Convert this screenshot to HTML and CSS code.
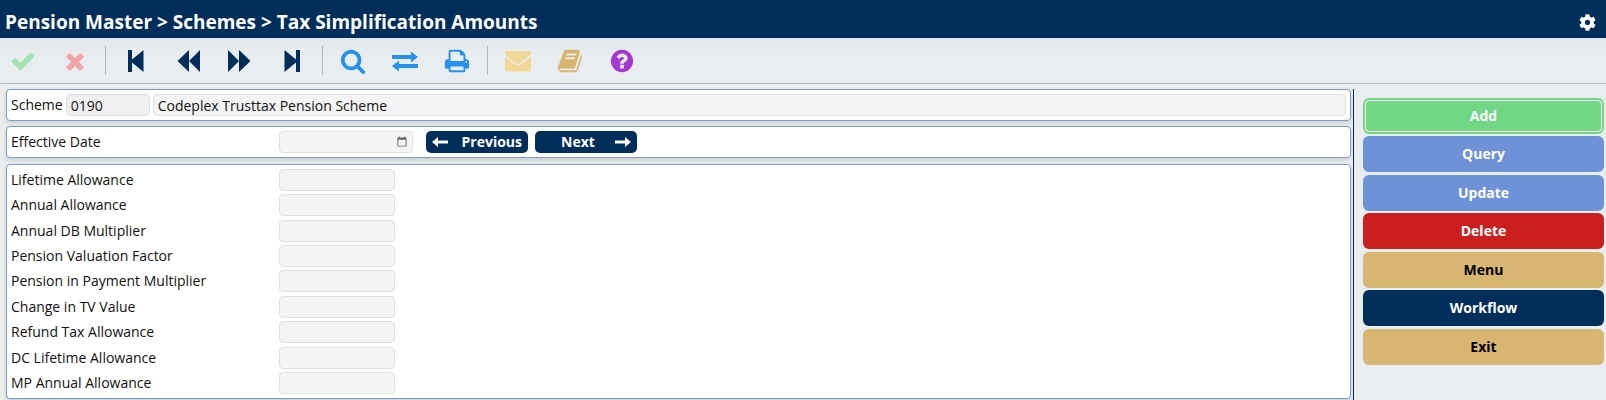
FILE: index.html
```html
<!DOCTYPE html>
<html lang="en">
<head>
<meta charset="utf-8">
<meta name="viewport" content="width=device-width, initial-scale=1">
<title>Tax Simplification Amounts</title>
<link rel="stylesheet" href="styles.css">
</head>
<body>
<header class="header">
  <h1 class="title">Pension Master &gt; Schemes &gt; Tax Simplification Amounts</h1>
  <button class="settings" type="button" aria-label="Settings">
    <svg class="settings-icon" viewBox="0 0 512 512"><path d="M487.4 315.7l-42.6-24.6c4.3-23.2 4.3-47 0-70.2l42.6-24.6c4.9-2.8 7.1-8.6 5.5-14-11.1-35.6-30-67.8-54.7-94.6-3.8-4.1-10-5.1-14.8-2.3L380.8 110c-17.9-15.4-38.5-27.3-60.8-35.1V25.8c0-5.6-3.9-10.5-9.4-11.7-36.7-8.2-74.3-7.8-109.2 0-5.5 1.2-9.4 6.1-9.4 11.7V75c-22.2 7.9-42.8 19.8-60.8 35.1L88.7 85.5c-4.9-2.8-11-1.9-14.8 2.3-24.7 26.7-43.6 58.9-54.7 94.6-1.7 5.4.6 11.2 5.5 14L67.3 221c-4.3 23.2-4.3 47 0 70.2l-42.6 24.6c-4.9 2.8-7.1 8.6-5.5 14 11.1 35.6 30 67.8 54.7 94.6 3.8 4.1 10 5.1 14.8 2.3l42.6-24.6c17.9 15.4 38.5 27.3 60.8 35.1v49.2c0 5.6 3.9 10.5 9.4 11.7 36.7 8.2 74.3 7.8 109.2 0 5.5-1.2 9.4-6.1 9.4-11.7v-49.2c22.2-7.9 42.8-19.8 60.8-35.1l42.6 24.6c4.9 2.8 11 1.9 14.8-2.3 24.7-26.7 43.6-58.9 54.7-94.6 1.5-5.5-.7-11.3-5.6-14.1zM256 336c-44.1 0-80-35.9-80-80s35.9-80 80-80 80 35.9 80 80-35.9 80-80 80z"/></svg>
  </button>
</header>

<nav class="toolbar" aria-label="Toolbar">
  <button class="tool tool-accept" type="button" aria-label="Accept"><svg class="icon" viewBox="0 0 1792 1792"><path d="M1671 566q0 40-28 68l-724 724-136 136q-28 28-68 28t-68-28l-136-136-362-362q-28-28-28-68t28-68l136-136q28-28 68-28t68 28l294 295 656-657q28-28 68-28t68 28l136 136q28 28 28 68z"/></svg></button>
  <button class="tool tool-cancel" type="button" aria-label="Cancel"><svg class="icon" viewBox="0 0 1792 1792"><path d="M1490 1322q0 40-28 68l-136 136q-28 28-68 28t-68-28l-294-294-294 294q-28 28-68 28t-68-28l-136-136q-28-28-28-68t28-68l294-294-294-294q-28-28-28-68t28-68l136-136q28-28 68-28t68 28l294 294 294-294q28-28 68-28t68 28l136 136q28 28 28 68t-28 68l-294 294 294 294q28 28 28 68z"/></svg></button>
  <span class="divider"></span>
  <button class="tool tool-move" type="button" aria-label="First"><svg class="icon" viewBox="0 0 26 26"><path d="M5 2h4v9.500L20.500 2v22L9 14.500V24H5z"/></svg></button>
  <button class="tool tool-move" type="button" aria-label="Back"><svg class="icon" viewBox="0 0 26 26"><path d="M2.500 13L14 2v11L25 2v22L14 13v11z"/></svg></button>
  <button class="tool tool-move" type="button" aria-label="Forward"><svg class="icon" viewBox="0 0 26 26"><path d="M23.500 13L12 2v11L1 2v22L12 13v11z"/></svg></button>
  <button class="tool tool-move" type="button" aria-label="Last"><svg class="icon" viewBox="0 0 26 26"><path d="M21 2h-4v9.500L5.500 2v22L17 14.500V24h4z"/></svg></button>
  <span class="divider"></span>
  <button class="tool tool-record" type="button" aria-label="Search"><svg class="icon" viewBox="0 0 1792 1792"><path d="M1216 832q0-185-131.500-316.500t-316.500-131.500-316.500 131.500-131.500 316.500 131.500 316.500 316.500 131.500 316.500-131.500 131.500-316.500zm512 832q0 52-38 90t-90 38q-54 0-90-38l-343-342q-179 124-399 124-143 0-273.500-55.500t-225-150-150-225-55.500-273.500 55.500-273.500 150-225 225-150 273.500-55.500 273.500 55.500 225 150 150 225 55.500 273.500q0 220-124 399l343 343q37 37 37 90z"/></svg></button>
  <button class="tool tool-record" type="button" aria-label="Switch"><svg class="icon" viewBox="0 0 26 26"><path d="M0 7h19V3.500L26 9l-7 5.500V11H0zM26 16v4H7v3.500L0 18l7-5.500V16z"/></svg></button>
  <button class="tool tool-record" type="button" aria-label="Print"><svg class="icon" viewBox="0 0 1792 1792"><path d="M448 1536h896v-256h-896v256zm0-640h896v-384h-160q-40 0-68-28t-28-68v-160h-640v640zm1152 64q0-26-19-45t-45-19-45 19-19 45 19 45 45 19 45-19 19-45zm128 0v416q0 13-9.500 22.500t-22.500 9.500h-224v160q0 40-28 68t-68 28h-960q-40 0-68-28t-28-68v-160h-224q-13 0-22.500-9.500t-9.500-22.500v-416q0-79 56.500-135.500t135.500-56.500h64v-544q0-40 28-68t68-28h672q40 0 88 20t76 48l152 152q28 28 48 76t20 88v256h64q79 0 135.500 56.500t56.500 135.500z"/></svg></button>
  <span class="divider"></span>
  <button class="tool tool-mail" type="button" aria-label="Mail"><svg class="icon" viewBox="0 0 26 26"><path d="M2 3h22q2 0 2 2v1.500L15.500 15q-2.500 2-5 0L0 6.500V5q0-2 2-2zM0 8.500l9.500 7.500q3.500 2.500 7 0L26 8.500v13q0 2-2 2H2q-2 0-2-2z"/></svg></button>
  <button class="tool tool-book" type="button" aria-label="Notes"><svg class="icon" viewBox="0 0 1792 1792"><path d="M1703 478q40 57 18 129l-275 906q-19 64-76.500 107.500t-122.500 43.500h-923q-77 0-148.500-53.500t-99.500-131.500q-24-67-2-127 0-4 3-27t4-37q1-8-3-21.500t-3-19.500q2-11 8-21t16.500-23.500 16.500-23.500q23-38 45-91.500t30-91.500q3-10 .5-30t-.5-28q3-11 17-28t17-23q21-36 42-92t25-90q1-9-2.500-32t.5-28q4-13 22-30.500t22-22.500q19-26 42.500-84.500t27.500-96.500q1-8-3-25.500t-2-26.500q2-8 9-18t18-23 17-21q8-12 16.500-30.500t15-35 16-36 19.500-32 26.500-23.500 36-11.500 47.500 5.500l-1 3q38-9 51-9h761q74 0 114 56t18 130l-274 906q-36 119-71.500 153.500t-128.500 34.500h-869q-27 0-38 15-11 16-1 43 24 70 144 70h923q29 0 56-15.500t35-41.500l300-987q7-22 5-57 38 15 59 43zm-1064 2q-4 13 2 22.500t20 9.500h608q13 0 25.500-9.500t16.500-22.500l21-64q4-13-2-22.500t-20-9.500h-608q-13 0-25.500 9.500t-16.500 22.500zm-83 256q-4 13 2 22.500t20 9.500h608q13 0 25.500-9.500t16.500-22.500l21-64q4-13-2-22.500t-20-9.500h-608q-13 0-25.500 9.500t-16.500 22.500z"/></svg></button>
  <button class="tool tool-help" type="button" aria-label="Help"><svg class="icon" viewBox="0 0 1792 1792"><path d="M1024 1376v-192q0-14-9-23t-23-9h-192q-14 0-23 9t-9 23v192q0 14 9 23t23 9h192q14 0 23-9t9-23zm256-672q0-88-55.500-163t-138.500-116-170-41q-243 0-371 213-15 24 8 42l132 100q7 6 19 6 16 0 25-12 53-68 86-92 34-24 86-24 48 0 85.500 26t37.500 59q0 38-20 61t-68 45q-63 28-115.500 86.500t-52.500 125.500v36q0 14 9 23t23 9h192q14 0 23-9t9-23q0-19 21.500-49.500t54.500-49.500q32-18 49-28.500t46-35 44.500-48 28-60.500 12.500-81zm384 192q0 209-103 385.500t-279.500 279.500-385.500 103-385.500-103-279.500-279.500-103-385.500 103-385.500 279.500-279.500 385.500-103 385.500 103 279.500 279.500 103 385.500z"/></svg></button>
</nav>

<div class="content">
  <main class="main">
    <section class="panel panel-scheme">
      <label for="scheme">Scheme</label>
      <input class="field field-code" id="scheme" type="text" value="0190">
      <input class="field field-name" type="text" value="Codeplex Trusttax Pension Scheme" aria-label="Scheme name" readonly>
    </section>

    <section class="panel panel-date">
      <label class="label" for="effective">Effective Date</label>
      <input class="field field-date" id="effective" type="date">
      <div class="pager">
        <button class="page-button" type="button"><svg class="arrow" viewBox="0 0 16 12"><path d="M0 6l6-5v3.500h10v3H6V11z"/></svg><span class="page-text">Previous</span></button>
        <button class="page-button" type="button"><span class="page-text">Next</span><svg class="arrow" viewBox="0 0 16 12"><path d="M16 6l-6-5v3.500H0v3h10V11z"/></svg></button>
      </div>
    </section>

    <section class="panel panel-amounts">
      <div class="row"><label class="label" for="a1">Lifetime Allowance</label><input class="field field-amount" id="a1" type="text" readonly></div>
      <div class="row"><label class="label" for="a2">Annual Allowance</label><input class="field field-amount" id="a2" type="text" readonly></div>
      <div class="row"><label class="label" for="a3">Annual DB Multiplier</label><input class="field field-amount" id="a3" type="text" readonly></div>
      <div class="row"><label class="label" for="a4">Pension Valuation Factor</label><input class="field field-amount" id="a4" type="text" readonly></div>
      <div class="row"><label class="label" for="a5">Pension in Payment Multiplier</label><input class="field field-amount" id="a5" type="text" readonly></div>
      <div class="row"><label class="label" for="a6">Change in TV Value</label><input class="field field-amount" id="a6" type="text" readonly></div>
      <div class="row"><label class="label" for="a7">Refund Tax Allowance</label><input class="field field-amount" id="a7" type="text" readonly></div>
      <div class="row"><label class="label" for="a8">DC Lifetime Allowance</label><input class="field field-amount" id="a8" type="text" readonly></div>
      <div class="row"><label class="label" for="a9">MP Annual Allowance</label><input class="field field-amount" id="a9" type="text" readonly></div>
    </section>
  </main>

  <aside class="actions">
    <button class="action action-add" type="button">Add</button>
    <button class="action action-blue" type="button">Query</button>
    <button class="action action-blue" type="button">Update</button>
    <button class="action action-red" type="button">Delete</button>
    <button class="action action-gold" type="button">Menu</button>
    <button class="action action-navy" type="button">Workflow</button>
    <button class="action action-gold" type="button">Exit</button>
  </aside>
</div>
</body>
</html>
```
FILE: styles.css
```css
* {
  box-sizing: border-box;
}

body {
  margin: 0;
  min-height: 100vh;
  display: flex;
  flex-direction: column;
  background: #e9edf0;
  color: #111;
  font: 14px/20px "Open Sans", "Noto Sans", sans-serif;
}

button,
input {
  font: inherit;
  color: inherit;
}

button {
  border: 0;
  padding: 0;
  cursor: pointer;
}

svg {
  display: block;
  fill: currentColor;
}

.header {
  display: flex;
  align-items: center;
  justify-content: space-between;
  height: 38px;
  padding: 6px 10px 0 5px;
  background: #002e5b;
  color: #fff;
}

.title {
  margin: 0;
  font-size: 19px;
  line-height: 28px;
  font-weight: 700;
}

.settings {
  background: none;
}

.settings-icon {
  width: 17px;
  height: 17px;
}

.toolbar {
  display: flex;
  align-items: center;
  gap: 8px;
  height: 46px;
  padding-left: 1px;
  border-bottom: 1px solid #b5b6ba;
  background: linear-gradient(#e3e6e9, #e9edf0 16px);
}

.tool {
  display: flex;
  justify-content: center;
  width: 44px;
  background: none;
}

.icon {
  width: 26px;
  height: 26px;
}

.divider {
  width: 1px;
  height: 29px;
  background: #b3b7bc;
}

.tool-accept { color: #a3e3b2; }
.tool-cancel { color: #f3a5a8; }
.tool-move { color: #002e5b; }
.tool-record { color: #2490f0; }
.tool-mail { color: #f2d897; }
.tool-book { color: #d8b56f; }
.tool-help { color: #a637cf; }

.content {
  flex: 1;
  display: flex;
  padding: 5px 2px 0 6px;
}

.main {
  flex: 1;
  min-width: 0;
  display: flex;
  flex-direction: column;
  gap: 5px;
  padding: 0 2px 1px 0;
  border-right: 1px solid #002e5b;
}

.panel {
  border: 1px solid #7d9cc7;
  border-radius: 4px;
  background: #fff;
  box-shadow: 0 2px 4px rgba(0, 0, 0, 0.14);
}

.panel-scheme,
.panel-date {
  display: flex;
  align-items: center;
  padding: 4px;
}

.panel-scheme {
  gap: 3px;
}

.panel-amounts {
  flex: 1;
  display: grid;
  grid-auto-rows: 1fr;
  margin-top: 1px;
  padding: 2px 4px;
}

.row {
  display: flex;
  align-items: center;
}

.label {
  width: 268px;
}

.field {
  height: 22px;
  padding: 0 4px;
  border: 1px solid #e0e0e0;
  border-radius: 4px;
  background: #f4f4f4;
  outline: 0;
}

.field-code {
  width: 84px;
  background: #efefef;
}

.field-name {
  flex: 1;
  min-width: 0;
}

.field-amount {
  width: 116px;
}

.field-date {
  width: 134px;
}

.field-date::-webkit-datetime-edit {
  opacity: 0;
}

.field-date::-webkit-calendar-picker-indicator {
  width: 12px;
  height: 12px;
  padding: 0;
  opacity: 0.6;
}

.pager {
  display: flex;
  gap: 7px;
  margin-left: 13px;
}

.page-button {
  display: flex;
  align-items: center;
  width: 102px;
  height: 22px;
  padding: 0 6px;
  border-radius: 5px;
  background: #002e5b;
  color: #fff;
  font-weight: 700;
}

.page-text {
  flex: 1;
}

.page-text:last-child {
  text-align: right;
}

.arrow {
  width: 16px;
  height: 12px;
}

.actions {
  width: 250px;
  padding: 9px 0 8px 9px;
}

.action {
  display: block;
  width: 100%;
  height: 36px;
  margin-bottom: 2px;
  border-radius: 6px;
  color: #fff;
  font-weight: 700;
}

.action:nth-child(even) {
  margin-bottom: 3px;
}

.action-add {
  background: #72d785;
  outline: 1px solid #fff;
  outline-offset: -3px;
}

.action-blue { background: #6f91d8; }
.action-red { background: #cb1f1f; }
.action-navy { background: #002e5b; }

.action-gold {
  background: #d8b671;
  color: #000;
}
```
